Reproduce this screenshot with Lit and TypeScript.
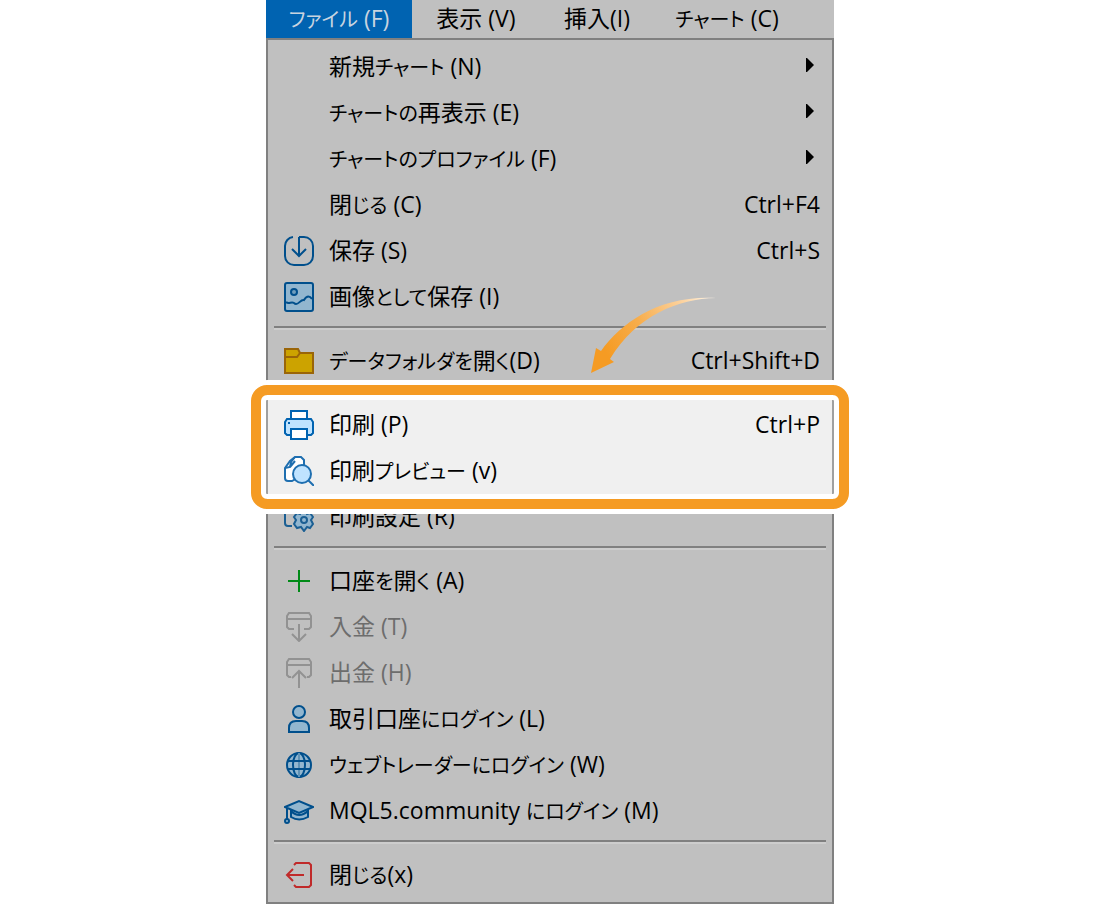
import { LitElement, html, svg, css, nothing } from "lit";
import { customElement, property } from "lit/decorators.js";

const icons: Record<string, unknown> = {
  save: svg`<g fill="none" stroke="#004f8c" stroke-width="2">
    <path d="M15 1H20A9 9 0 0 1 29 10V20A9 9 0 0 1 20 29H10A9 9 0 0 1 1 20V10A9 9 0 0 1 9 1"/>
    <path d="M15 1V19M8 13L15 20L22 13"/></g>`,
  image: svg`<g fill="none" stroke="#004f8c" stroke-width="2">
    <rect x="1" y="1" width="28" height="28" rx="2" fill="#92b6cf"/>
    <circle cx="10" cy="10" r="3" fill="#6f9dbd"/>
    <path d="M2 20C5 23 7 19 10 21C14 25 16 17 20 18C23 13 26 14 28 17"/></g>`,
  folder: svg`<g fill="#cca300" stroke="#9a6508" stroke-width="2">
    <path d="M1 3H14L16 7H29V27H1Z"/><path d="M1 11H13L16 7"/></g>`,
  print: svg`<g fill="#bfe3ff" stroke="#0063b1" stroke-width="2">
    <path d="M7 25H3L1 23V12L3 9H27L29 12V23L27 25H23"/>
    <path d="M7 9V1H23V9Z" fill="#fff"/>
    <rect x="7" y="19" width="16" height="10" fill="#fff"/></g>
    <rect x="4" y="12" width="2" height="2" fill="#0063b1"/>`,
  preview: svg`<g fill="#fff" stroke="#1f6fb0" stroke-width="2">
    <path d="M8 25H4Q1 25 1 22V12L6 5L11 1H17L20 4V18Z"/>
    <path d="M1 12L6 11L7 6L11 1M6 11L11 5" fill="none"/>
    <circle cx="18" cy="18" r="9" fill="#bfe3ff"/>
    <path d="M24 24L30 30"/></g>`,
  setup: svg`<g fill="none" stroke="#1b5f93" stroke-width="2">
    <path d="M8 24H4Q1 24 1 21V11L10 1H17Q20 1 20 5"/>
    <path fill="#92b6cf" d="M17 9H22L23 12L26 11L29 15L27 18L29 22L26 26L23 25L20 29L17 25L13 26L10 22L12 18L10 15L13 11L16 12Z"/>
    <circle cx="20" cy="18" r="3"/></g>`,
  plus: svg`<path d="M15 4V26M4 15H26" stroke="#008a17" stroke-width="2"/>`,
  deposit: svg`<g fill="none" stroke="#929292" stroke-width="2">
    <path d="M10 17H5L3 15V4L5 1H25L27 4V15L25 17H20M3 7H27M15 12V29M8 22L15 29L22 22"/></g>`,
  withdraw: svg`<g fill="none" stroke="#929292" stroke-width="2">
    <path d="M7 19H5L3 17V4L5 1H25L27 4V17L25 19H23M3 7H27M15 30V13M8 20L15 13L22 20"/></g>`,
  person: svg`<g fill="#92b6cf" stroke="#004f8c" stroke-width="2">
    <circle cx="15" cy="8" r="6"/>
    <path d="M5 28V24Q5 17 12 17H18Q25 17 25 24V28Z"/></g>`,
  globe: svg`<g fill="none" stroke="#004f8c" stroke-width="2">
    <circle cx="15" cy="15" r="12" fill="#92b6cf"/>
    <ellipse cx="15" cy="15" rx="6" ry="12"/>
    <path d="M15 3V27" stroke="#5f92b6"/>
    <path d="M4 11H26M4 19H26"/></g>`,
  cap: svg`<g fill="#92b6cf" stroke="#004f8c" stroke-width="2">
    <path d="M7 12V21Q15 26 24 21V12"/>
    <path d="M7 15Q15 23 24 15" fill="none"/>
    <path d="M1 11L15 5L29 11L15 17Z"/>
    <path d="M3 12V24" fill="none"/><circle cx="3" cy="25" r="2"/></g>`,
  exit: svg`<g fill="none" stroke="#c02a2a" stroke-width="2">
    <path d="M10 5L12 3H25L27 5V25L25 27H12L10 25M3 15H20M9 9L3 15L9 21"/></g>`,
};

/* Kana runs are set a little smaller than kanji and Latin, as in compact UI fonts. */
const withKana = (text: string) =>
  text
    .split(/([ぁ-んァ-ヶー]+)/)
    .map((part, i) => (i % 2 ? html`<span class="kana">${part}</span>` : part));

const kanaStyle = css`
  .kana { font-size: 20px; line-height: 20px; }
`;

@customElement("menu-row")
class MenuRow extends LitElement {
  @property() icon = "";
  @property() label = "";
  @property() shortcut = "";
  @property({ type: Boolean }) submenu = false;
  @property({ type: Boolean }) disabled = false;

  static styles = [
    kanaStyle,
    css`
      :host { display: block; }
      .row {
        display: flex;
        align-items: center;
        gap: 15px;
        width: 100%;
        height: 46px;
        margin: 0;
        padding: 0 12px 0 16px;
        border: 0;
        background: none;
        color: #000;
        font: inherit;
        text-align: left;
        white-space: nowrap;
      }
      .row:disabled { color: #6d6d6d; }
      .icon { flex: none; width: 30px; height: 30px; }
      .label { flex: 1; }
      .label, .shortcut { padding-bottom: 2px; }
      .marker { flex: none; width: 14px; height: 18px; }
    `,
  ];

  render() {
    return html`<button class="row" role="menuitem" ?disabled=${this.disabled}>
      <svg class="icon" viewBox="0 0 30 30" aria-hidden="true">${icons[this.icon] ?? nothing}</svg>
      <span class="label">${withKana(this.label)}</span>
      ${this.shortcut ? html`<span class="shortcut">${this.shortcut}</span>` : nothing}
      ${this.submenu
        ? html`<svg class="marker" viewBox="0 0 14 18" aria-hidden="true"><path d="M0 0H1L8 7L1 14H0Z"/></svg>`
        : nothing}
    </button>`;
  }
}

@customElement("app-root")
class AppRoot extends LitElement {
  static styles = [
    kanaStyle,
    css`
      :host {
        display: block;
        background: #fff;
        font-family: "Open Sans", "Noto Sans CJK JP", sans-serif;
        font-size: 23px;
        line-height: 30px;
        font-feature-settings: "palt";
      }
      .window {
        width: 100%;
        max-width: 568px;
        margin: 0 auto;
        background: #c0c0c0;
      }
      .bar {
        display: grid;
        grid-template-columns: 146px 128px 114px 146px;
        height: 38px;
      }
      .tab {
        padding: 0 0 2px;
        border: 0;
        background: none;
        color: #000;
        font: inherit;
        white-space: nowrap;
      }
      .tab.open { background: #0063b1; color: #c8d4e0; }
      .menu { border: 2px solid #808080; padding: 4px 0; }
      .rule {
        height: 2px;
        margin: 6px 6px 8px;
        border: 0;
        border-top: 2px solid #808080;
        background: #cdcdcd;
      }
      .spotlight {
        position: relative;
        margin: 0 -2px;
        padding-top: 18px;
        border: solid #a0a0a0;
        border-width: 0 2px;
        background: #f0f0f0;
      }
      .ring {
        position: absolute;
        z-index: 1;
        inset: 1px -17px -15px;
        border: 10px solid #f59b23;
        border-radius: 16px;
        box-shadow: 0 0 0 5px #fff, inset 0 0 0 5px #fff;
        pointer-events: none;
      }
      .arrow {
        position: absolute;
        z-index: 2;
        top: -88px;
        left: 320px;
        width: 130px;
        height: 80px;
        pointer-events: none;
      }
    `,
  ];

  render() {
    return html`<div class="window">
      <nav class="bar" role="menubar">
        <button class="tab open" role="menuitem">${withKana("ファイル (F)")}</button>
        <button class="tab" role="menuitem">${withKana("表示 (V)")}</button>
        <button class="tab" role="menuitem">${withKana("挿入(I)")}</button>
        <button class="tab" role="menuitem">${withKana("チャート (C)")}</button>
      </nav>
      <div class="menu" role="menu">
        <menu-row label="新規チャート (N)" submenu></menu-row>
        <menu-row label="チャートの再表示 (E)" submenu></menu-row>
        <menu-row label="チャートのプロファイル (F)" submenu></menu-row>
        <menu-row label="閉じる (C)" shortcut="Ctrl+F4"></menu-row>
        <menu-row icon="save" label="保存 (S)" shortcut="Ctrl+S"></menu-row>
        <menu-row icon="image" label="画像として保存 (I)"></menu-row>
        <hr class="rule" />
        <menu-row icon="folder" label="データフォルダを開く(D)" shortcut="Ctrl+Shift+D"></menu-row>
        <div class="spotlight">
          <menu-row icon="print" label="印刷 (P)" shortcut="Ctrl+P"></menu-row>
          <menu-row icon="preview" label="印刷プレビュー (v)"></menu-row>
          <div class="ring"></div>
          <svg class="arrow" viewBox="0 0 130 80" aria-hidden="true">
            <defs>
              <linearGradient id="fade" gradientUnits="userSpaceOnUse" x1="20" y1="60" x2="128" y2="2">
                <stop offset="0" stop-color="#f59b23" />
                <stop offset="0.35" stop-color="#f7ad4b" />
                <stop offset="0.75" stop-color="#fcd3a0" />
                <stop offset="1" stop-color="#fff8ee" />
              </linearGradient>
            </defs>
            <path fill="url(#fade)" d="M3 77L8 52L13 55C34 26 72 -1 128 2C90 3 49 19 22 63L26 66Z" />
          </svg>
        </div>
        <menu-row icon="setup" label="印刷設定 (R)"></menu-row>
        <hr class="rule" />
        <menu-row icon="plus" label="口座を開く (A)"></menu-row>
        <menu-row icon="deposit" label="入金 (T)" disabled></menu-row>
        <menu-row icon="withdraw" label="出金 (H)" disabled></menu-row>
        <menu-row icon="person" label="取引口座にログイン (L)"></menu-row>
        <menu-row icon="globe" label="ウェブトレーダーにログイン (W)"></menu-row>
        <menu-row icon="cap" label="MQL5.community にログイン (M)"></menu-row>
        <hr class="rule" />
        <menu-row icon="exit" label="閉じる(x)"></menu-row>
      </div>
    </div>`;
  }
}
